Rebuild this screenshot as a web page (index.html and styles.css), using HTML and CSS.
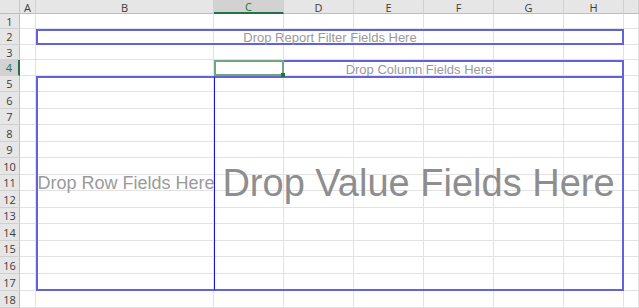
FILE: index.html
```html
<!DOCTYPE html>
<html lang="en">

<head>
    <meta charset="UTF-8">
    <title>Sheet1</title>
    <link rel="stylesheet" href="styles.css">
</head>

<body>
    <div class="sheet">
        <!-- cell layer -->
        <div class="frame cells">
            <div class="corner"><span class="tri"></span></div>
            <div class="ch">A</div><div class="ch">B</div><div class="ch sel-col">C</div><div class="ch">D</div><div class="ch">E</div><div class="ch">F</div><div class="ch">G</div><div class="ch">H</div><div class="ch"></div>
            <div class="rh">1</div><span></span><span></span><span></span><span></span><span></span><span></span><span></span><span></span><span></span>
            <div class="rh">2</div><span></span><span></span><span></span><span></span><span></span><span></span><span></span><span></span><span></span>
            <div class="rh">3</div><span></span><span></span><span></span><span></span><span></span><span></span><span></span><span></span><span></span>
            <div class="rh sel-row">4</div><span></span><span></span><span></span><span></span><span></span><span></span><span></span><span></span><span></span>
            <div class="rh">5</div><span></span><span></span><span></span><span></span><span></span><span></span><span></span><span></span><span></span>
            <div class="rh">6</div><span></span><span></span><span></span><span></span><span></span><span></span><span></span><span></span><span></span>
            <div class="rh">7</div><span></span><span></span><span></span><span></span><span></span><span></span><span></span><span></span><span></span>
            <div class="rh">8</div><span></span><span></span><span></span><span></span><span></span><span></span><span></span><span></span><span></span>
            <div class="rh">9</div><span></span><span></span><span></span><span></span><span></span><span></span><span></span><span></span><span></span>
            <div class="rh">10</div><span></span><span></span><span></span><span></span><span></span><span></span><span></span><span></span><span></span>
            <div class="rh">11</div><span></span><span></span><span></span><span></span><span></span><span></span><span></span><span></span><span></span>
            <div class="rh">12</div><span></span><span></span><span></span><span></span><span></span><span></span><span></span><span></span><span></span>
            <div class="rh">13</div><span></span><span></span><span></span><span></span><span></span><span></span><span></span><span></span><span></span>
            <div class="rh">14</div><span></span><span></span><span></span><span></span><span></span><span></span><span></span><span></span><span></span>
            <div class="rh">15</div><span></span><span></span><span></span><span></span><span></span><span></span><span></span><span></span><span></span>
            <div class="rh">16</div><span></span><span></span><span></span><span></span><span></span><span></span><span></span><span></span><span></span>
            <div class="rh">17</div><span></span><span></span><span></span><span></span><span></span><span></span><span></span><span></span><span></span>
            <div class="rh">18</div><span></span><span></span><span></span><span></span><span></span><span></span><span></span><span></span><span></span>
        </div>

        <!-- pivot table drop areas -->
        <div class="frame pivot">
            <div class="area filter">Drop Report Filter Fields Here</div>
            <div class="area columns">Drop Column Fields Here</div>
            <div class="area rows">Drop Row Fields Here</div>
            <div class="area values">Drop Value Fields Here</div>
            <div class="cursor"></div>
        </div>
    </div>
</body>

</html>
```

FILE: styles.css
```css
* {
    margin: 0;
    padding: 0;
    box-sizing: border-box;
}

body {
    width: 639px;
    height: 308px;
    overflow: hidden;
    background: #fff;
    font-family: "Open Sans", "Liberation Sans", sans-serif;
}

.sheet {
    display: grid;
}

.frame {
    grid-area: 1 / 1;
    display: grid;
    grid-template-columns: 20px 16px 178px 70px 70px 70px 70px 70px 60px 15px;
    grid-template-rows: 14px 15px 16px 15px 16px 16px 17px 16px 17px 16px 17px 16px 17px 16px 17px 16px 17px 17px 17px;
}

/* headers */
.corner,
.ch,
.rh {
    background: #e6e6e6;
    color: #3c3c3c;
    font-size: 11px;
    display: flex;
    align-items: center;
    justify-content: center;
}

.corner {
    border-right: 1px solid #c9c9c9;
    border-bottom: 1px solid #bdbdbd;
    align-items: flex-end;
    justify-content: flex-end;
}

.tri {
    width: 0;
    height: 0;
    border-left: 10px solid transparent;
    border-bottom: 10px solid #bfbfbf;
    margin: 0 2px 2px 0;
}

.ch {
    border-right: 1px solid #d0d0d0;
    border-bottom: 1px solid #bdbdbd;
    padding-top: 1px;
}

.rh {
    border-right: 1px solid #bdbdbd;
    border-bottom: 1px solid #d0d0d0;
}

.ch.sel-col {
    background: #d2d2d2;
    color: #217346;
    border-bottom: 2px solid #217346;
}

.rh.sel-row {
    background: #d2d2d2;
    color: #217346;
    border-right: 2px solid #217346;
}

.cells span {
    border-right: 1px solid #e2e2e2;
    border-bottom: 1px solid #e2e2e2;
}

/* pivot areas */
.area {
    font-family: "Liberation Sans", Arial, sans-serif;
    color: #9a9a9a;
    display: flex;
    align-items: center;
    justify-content: center;
    white-space: nowrap;
    border: 2px solid #6262dc;
}

.filter {
    grid-row: 3;
    grid-column: 3 / 10;
    font-size: 13px;
}

.columns {
    grid-row: 5;
    grid-column: 4 / 10;
    font-size: 13px;
    border-bottom: none;
}

.rows {
    grid-row: 6 / 19;
    grid-column: 3;
    font-size: 18px;
    border-right: none;
}

.values {
    grid-row: 6 / 19;
    grid-column: 4 / 10;
    font-size: 38px;
    color: #8e8e8e;
    border-left: 1px solid #1414f0;
}

.cursor {
    grid-row: 5;
    grid-column: 4;
    border: 2px solid #6fa684;
    position: relative;
}

.cursor::after {
    content: "";
    position: absolute;
    right: -3px;
    bottom: -3px;
    width: 4px;
    height: 4px;
    background: #217346;
}
```
